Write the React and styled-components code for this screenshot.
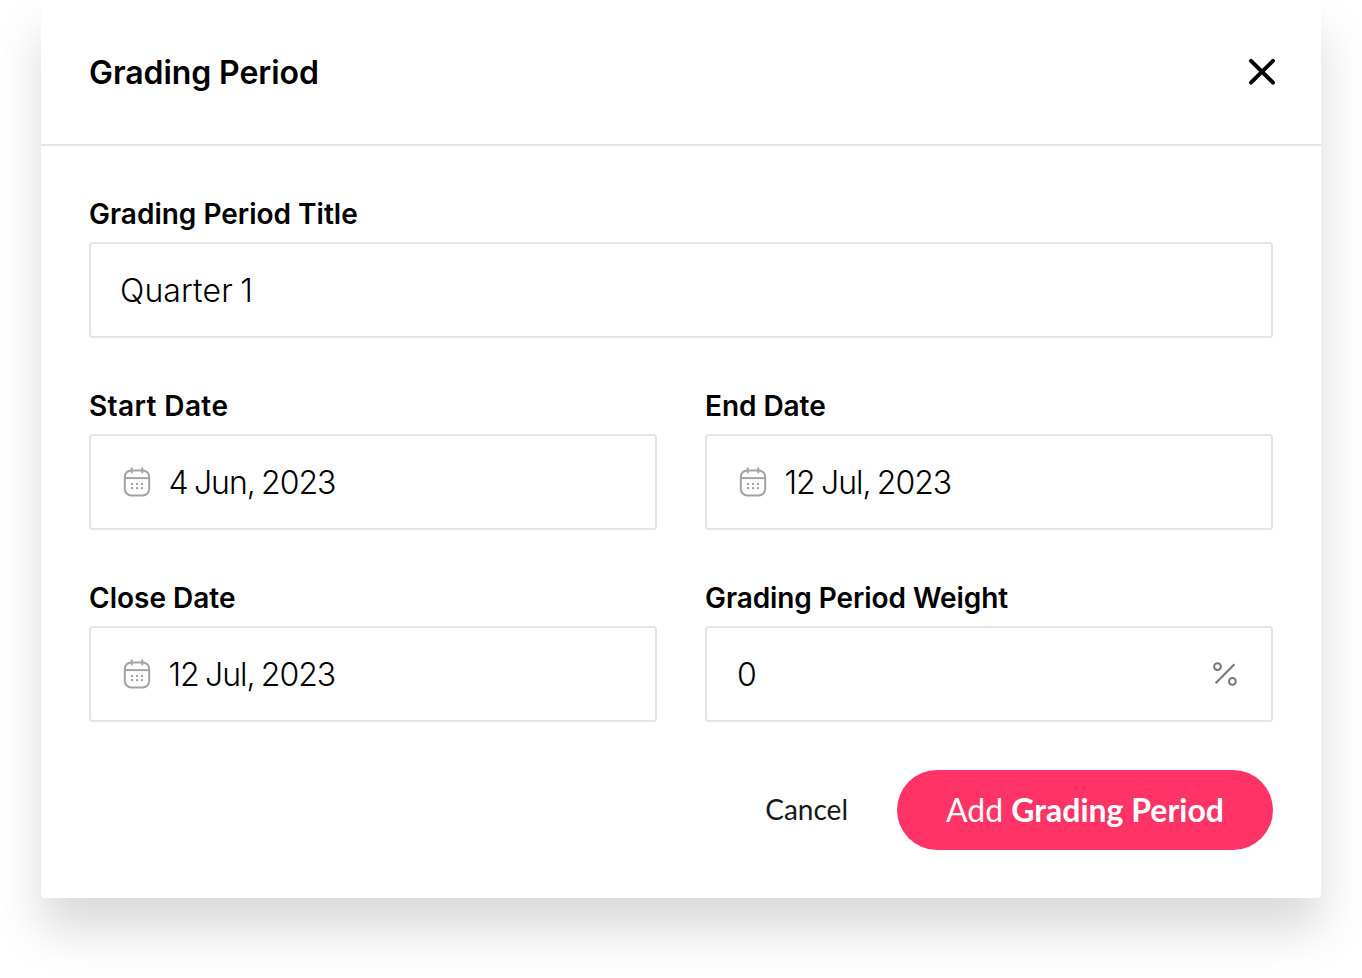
import React from "react";
import styled, { createGlobalStyle } from "styled-components";

const Global = createGlobalStyle`
  * { box-sizing: border-box; }
  body { margin: 0; background: #fff; overflow: hidden; }
  button { appearance: none; border: 0; margin: 0; padding: 0; background: none; cursor: pointer; }
`;

const Page = styled.main`
  height: 978px;
  padding: 0 41px;
  font-family: Inter, "Liberation Sans", sans-serif;
  color: #000;
`;

const Dialog = styled.section`
  height: 898px;
  background: #fff;
  border-radius: 4px;
  box-shadow: 0 32px 48px rgba(0, 0, 0, 0.15);
`;

const Header = styled.header`
  display: flex;
  align-items: center;
  justify-content: space-between;
  height: 146px;
  padding: 0 43px 0 48px;
  border-bottom: 2px solid #e4e4e4;
`;

const Title = styled.h1`
  margin: 0;
  padding-top: 2px;
  font-size: 32px;
  font-weight: 600;
  line-height: 40px;
  letter-spacing: -0.08px;
`;

const CloseButton = styled.button`
  display: flex;
  width: 32px;
  height: 32px;
`;

const Form = styled.form`
  display: grid;
  grid-template-columns: 1fr 1fr;
  gap: 52px 48px;
  padding: 52px 48px 48px;
`;

const FieldBlock = styled.div`
  display: flex;
  flex-direction: column;
  gap: 12px;
  grid-column: ${(p) => (p.$wide ? "1 / -1" : "auto")};
`;

const Label = styled.label`
  font-size: 28px;
  font-weight: 600;
  line-height: 32px;
  letter-spacing: ${(p) => p.$tracking || "0"};
`;

const Box = styled.div`
  display: flex;
  align-items: center;
  gap: 16px;
  height: 96px;
  padding: 0 30px;
  border: 2px solid #e4e4e4;
  border-radius: 4px;
`;

const Value = styled.span`
  flex: 1;
  margin-left: ${(p) => (p.$date ? "-0.5px" : p.$numeric ? "0" : "-1px")};
  padding-top: 2px;
  font-size: 32px;
  font-weight: ${(p) => (p.$date || p.$numeric ? 350 : 300)};
  line-height: 40px;
  letter-spacing: ${(p) => (p.$date ? "-1.05px" : "0.1px")};
  word-spacing: -1.5px;
  white-space: nowrap;
`;

const Actions = styled.footer`
  grid-column: 1 / -1;
  display: flex;
  align-items: center;
  justify-content: flex-end;
  gap: 48px;
  margin-top: -4px;
`;

const CancelButton = styled.button`
  padding: 0 1px 2px 0;
  font: 400 28px/34px Lato, sans-serif;
  color: #161819;
`;

const SubmitButton = styled.button`
  width: 376px;
  height: 80px;
  border-radius: 40px;
  && { background: #ff3366; }
  font: 400 32px/40px Lato, sans-serif;
  color: #fff;
  white-space: nowrap;

  strong { font-weight: 700; }
`;

const CloseIcon = () => (
  <svg width="32" height="32" viewBox="0 0 32 32" stroke="#000" strokeWidth="4" strokeLinecap="round">
    <path d="M5 4.8 27 26.6M27 4.8 5 26.6" />
  </svg>
);

const CalendarIcon = () => (
  <svg width="32" height="32" viewBox="0 0 32 32" fill="none" stroke="#a3a3a3" strokeWidth="2">
    <rect x="3.8" y="4.4" width="24.4" height="25" rx="6.5" />
    <path d="M3.8 12.1H28.2" />
    <path d="M10.7 2.3V6.6M21.3 2.3V6.6" strokeLinecap="round" />
    <path d="M10 18h2M15 18h2M20 18h2M10 22h2M15 22h2M20 22h2" />
  </svg>
);

const PercentIcon = () => (
  <svg width="32" height="32" viewBox="0 0 32 32" fill="none" stroke="#777" strokeWidth="2">
    <circle cx="8.5" cy="8.6" r="3.4" />
    <circle cx="23.4" cy="23.4" r="3.4" />
    <path d="M6.6 25.3 25.4 6.2" />
  </svg>
);

function Field({ label, tracking, value, wide, date, numeric, suffix }) {
  return (
    <FieldBlock $wide={wide}>
      <Label $tracking={tracking}>{label}</Label>
      <Box>
        {date && <CalendarIcon />}
        <Value $date={date} $numeric={numeric}>{value}</Value>
        {suffix}
      </Box>
    </FieldBlock>
  );
}

export default function App() {
  return (
    <Page>
      <Global />
      <Dialog>
        <Header>
          <Title>Grading Period</Title>
          <CloseButton aria-label="Close"><CloseIcon /></CloseButton>
        </Header>
        <Form onSubmit={(e) => e.preventDefault()}>
          <Field wide label="Grading Period Title" value="Quarter 1" />
          <Field date label="Start Date" tracking="0.4px" value="4 Jun, 2023" />
          <Field date label="End Date" tracking="-0.05px" value="12 Jul, 2023" />
          <Field date label="Close Date" value="12 Jul, 2023" />
          <Field numeric label="Grading Period Weight" tracking="-0.08px" value="0" suffix={<PercentIcon />} />
          <Actions>
            <CancelButton type="button">Cancel</CancelButton>
            <SubmitButton type="submit">Add <strong>Grading Period</strong></SubmitButton>
          </Actions>
        </Form>
      </Dialog>
    </Page>
  );
}
